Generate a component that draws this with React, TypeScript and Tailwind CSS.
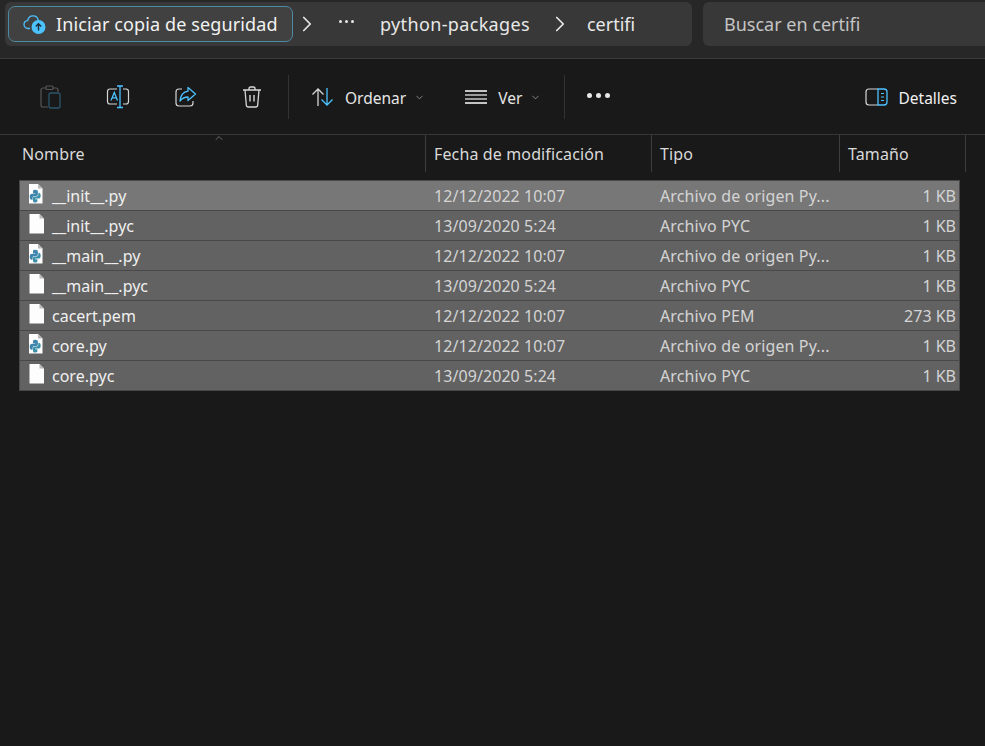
import { ChevronDown, ChevronRight, ChevronUp } from "lucide-react";

const font = "font-['Noto_Sans','Open_Sans',sans-serif]";

type FileRow = { name: string; date: string; type: string; size: string; python: boolean };

const files: FileRow[] = [
  { name: "__init__.py", date: "12/12/2022 10:07", type: "Archivo de origen Py...", size: "1 KB", python: true },
  { name: "__init__.pyc", date: "13/09/2020 5:24", type: "Archivo PYC", size: "1 KB", python: false },
  { name: "__main__.py", date: "12/12/2022 10:07", type: "Archivo de origen Py...", size: "1 KB", python: true },
  { name: "__main__.pyc", date: "13/09/2020 5:24", type: "Archivo PYC", size: "1 KB", python: false },
  { name: "cacert.pem", date: "12/12/2022 10:07", type: "Archivo PEM", size: "273 KB", python: false },
  { name: "core.py", date: "12/12/2022 10:07", type: "Archivo de origen Py...", size: "1 KB", python: true },
  { name: "core.pyc", date: "13/09/2020 5:24", type: "Archivo PYC", size: "1 KB", python: false },
];

function FileIcon({ python }: { python: boolean }) {
  return (
    <svg width="16" height="20" viewBox="0 0 16 20" className="mb-[3px] shrink-0">
      {python ? (
        <g transform="translate(-1 0)">
          <path d="M0 0H10L14.5 4.5V19.5H0Z" fill="#fdfdfd" />
          <path d="M10 0V4.5H14.5Z" fill="#b8b8b8" />
          <g transform="translate(0.3 -1.4) scale(1 1.2)">
            <path d="M6.6 6C4.6 6 4.7 7 4.7 7.5V8.8H6.9V9.3H3.6C2.4 9.3 1.4 10 1.4 11.7C1.4 13.4 2.2 14.2 3.3 14.2H4.3V12.9C4.3 11.9 5.1 11.2 6.1 11.2H8.2C9 11.2 9.6 10.6 9.6 9.8V7.5C9.6 6.7 8.8 6 6.6 6Z" fill="#3f86ae" />
            <path d="M7.2 16.6C9.2 16.6 9.1 15.6 9.1 15.1V13.8H6.9V13.3H10.2C11.4 13.3 12.4 12.6 12.4 10.9C12.4 9.2 11.6 8.4 10.5 8.4H10.1V9.8C10.1 10.8 9.3 11.6 8.3 11.6H6.1C5.3 11.6 4.7 12.2 4.7 13V15.1C4.7 15.9 5 16.6 7.2 16.6Z" fill="#3c8fa8" />
          </g>
        </g>
      ) : (
        <>
          <path d="M0.5 0H10.5L15 4.5V19.5H0.5Z" fill="#fdfdfd" />
          <path d="M10.5 0V4.5H15Z" fill="#b8b8b8" />
        </>
      )}
    </svg>
  );
}

function CloudIcon() {
  return (
    <svg width="24" height="22" viewBox="0 0 24 22" fill="none" className="shrink-0">
      <path d="M6.5 15.5H5C2.8 15.5 1 13.8 1 11.6C1 9.5 2.6 7.9 4.6 7.7C5.2 4.8 7.4 2.8 10 2.8C12.7 2.8 14.9 4.8 15.4 7.5" stroke="#4cc2ff" strokeWidth="1.3" strokeLinecap="round" />
      <circle cx="15.5" cy="14" r="7" fill="#4cc2ff" />
      <path d="M15.5 17.5V11M12.8 13.5L15.5 10.8L18.2 13.5" stroke="#1b2a33" strokeWidth="1.4" />
    </svg>
  );
}

function Toolbar() {
  return (
    <div className="flex h-[76px] items-center border-b border-[#373737] bg-[#191919]">
      <div className="flex w-[288px] items-center">
        <svg width="22" height="24" viewBox="0 0 22 24" fill="none" className="ml-[40px] mt-[1px]">
          <path d="M6 3H3C1.9 3 1 3.9 1 5V20C1 21.2 1.9 22 3 22H8" stroke="#565656" strokeWidth="1.2" />
          <path d="M13 3H16C17 3 18 3.9 18 5V7" stroke="#565656" strokeWidth="1.2" />
          <rect x="6" y="1" width="7" height="3.5" rx="1" stroke="#565656" strokeWidth="1.2" />
          <rect x="9" y="8" width="11" height="15" rx="2" stroke="#2b566b" strokeWidth="1.3" />
        </svg>
        <svg width="24" height="24" viewBox="0 0 24 24" fill="none" className="ml-[44px]">
          <path d="M11 4H4C2.4 4 1.5 5 1.5 6.5V16.5C1.5 18 2.4 19 4 19H11" stroke="#d6d6d6" strokeWidth="1.2" />
          <path d="M17 4H20C21.6 4 22.5 5 22.5 6.5V16.5C22.5 18 21.6 19 20 19H17" stroke="#d6d6d6" strokeWidth="1.2" />
          <path d="M11 1H17M14 1V22.5M11 22.5H17" stroke="#4cc2ff" strokeWidth="1.3" />
          <path d="M5 15.5L8.3 7.5L11.5 15.5M6.3 12.8H10.4" stroke="#4cc2ff" strokeWidth="1.3" />
        </svg>
        <svg width="22" height="22" viewBox="0 0 22 22" fill="none" className="ml-[45px]">
          <path d="M7 3H4C2.3 3 1 4.3 1 6V17C1 18.7 2.3 20 4 20H15C16.7 20 18 18.7 18 17V15" stroke="#d6d6d6" strokeWidth="1.2" />
          <path d="M13 1.5L20.5 8L13 14.5V11C9.5 11 7.2 12.2 5 15C5.5 10 8 6 13 5.2Z" stroke="#4cc2ff" strokeWidth="1.3" strokeLinejoin="round" />
        </svg>
        <svg width="20" height="22" viewBox="0 0 20 22" fill="none" className="ml-[45px]">
          <path d="M1 4H19M7 4V2.5C7 1.7 7.6 1 8.5 1H11.5C12.4 1 13 1.7 13 2.5V4" stroke="#d6d6d6" strokeWidth="1.4" />
          <path d="M3 4L4.3 19C4.4 20.2 5.2 21 6.4 21H13.6C14.8 21 15.6 20.2 15.7 19L17 4" stroke="#d6d6d6" strokeWidth="1.3" />
          <path d="M8 9V15.5M12 9V15.5" stroke="#d6d6d6" strokeWidth="1.4" />
        </svg>
      </div>
      <div className="h-[44px] w-px bg-[#333333]" />
      <div className="ml-[22px] flex items-center">
        <svg width="24" height="20" viewBox="0 0 24 20" fill="none">
          <path d="M7 19V2M1.5 7.5L7 2L12.5 7.5" stroke="#d6d6d6" strokeWidth="1.3" />
          <path d="M16 1V18M10.5 12.5L16 18L21.5 12.5" stroke="#4cc2ff" strokeWidth="1.3" />
        </svg>
        <span className="ml-[10px] mt-[3px] text-[15.5px] leading-5 text-[#e6e6e6]">Ordenar</span>
        <ChevronDown size={11} strokeWidth={1.5} className="ml-[8px] mt-[1px] text-[#b0b0b0]" />
      </div>
      <div className="ml-[40px] flex items-center">
        <div className="flex w-[22px] flex-col gap-[2px]">
          <div className="h-[2px] bg-[#c4c4c4]" />
          <div className="h-[2px] bg-[#9a9a9a]" />
          <div className="h-[2px] bg-[#9a9a9a]" />
          <div className="h-[2px] bg-[#c4c4c4]" />
        </div>
        <span className="ml-[11px] mt-[3px] text-[15.5px] leading-5 text-[#e6e6e6]">Ver</span>
        <ChevronDown size={11} strokeWidth={1.5} className="ml-[8px] mt-[1px] text-[#b0b0b0]" />
      </div>
      <div className="ml-[23px] h-[44px] w-px bg-[#333333]" />
      <div className="ml-[22px] mb-[3px] flex gap-[4px]">
        <div className="h-[5px] w-[5px] rounded-full bg-[#e8e8e8]" />
        <div className="h-[5px] w-[5px] rounded-full bg-[#e8e8e8]" />
        <div className="h-[5px] w-[5px] rounded-full bg-[#e8e8e8]" />
      </div>
      <div className="ml-auto mr-[28px] flex items-center">
        <svg width="23" height="18" viewBox="0 0 23 18" fill="none">
          <path d="M13 1H4C2.3 1 1 2.3 1 4V14C1 15.7 2.3 17 4 17H13" stroke="#d6d6d6" strokeWidth="1.2" />
          <path d="M13 1H19C20.7 1 22 2.3 22 4V14C22 15.7 20.7 17 19 17H13V1Z" stroke="#4cc2ff" strokeWidth="1.3" />
          <path d="M16 5.5H19M16 9H19M16 12.5H19" stroke="#4cc2ff" strokeWidth="1.2" />
        </svg>
        <span className="ml-[10px] mt-[3px] text-[15.5px] leading-5 text-[#f0f0f0]">Detalles</span>
      </div>
    </div>
  );
}

export default function App() {
  return (
    <div className={`h-[746px] w-[985px] overflow-hidden bg-[#191919] ${font}`}>
      <div className="flex h-[59px] gap-[11px] border-b border-[#3a3a3a] bg-[#272727] pl-[5px] pt-[2px]">
        <div className="flex h-[44px] w-[687px] items-center rounded-md bg-[#383838] pl-[3px]">
          <div className="flex h-[36px] w-[285px] items-center rounded-[7px] border border-[#4d8aa3] bg-[#414141] pl-[14px]">
            <CloudIcon />
            <span className="ml-[9px] text-[18px] leading-6 tracking-[0.12px] text-[#f2f2f2]">Iniciar copia de seguridad</span>
          </div>
          <ChevronRight size={26} strokeWidth={1.6} className="ml-[1px] text-[#e8e8e8]" />
          <div className="ml-[19px] mb-[5px] flex gap-[3px]">
            <div className="h-[3px] w-[3px] rounded-full bg-[#e8e8e8]" />
            <div className="h-[3px] w-[3px] rounded-full bg-[#e8e8e8]" />
            <div className="h-[3px] w-[3px] rounded-full bg-[#e8e8e8]" />
          </div>
          <span className="ml-[26px] text-[18px] leading-6 tracking-[0.35px] text-[#e8e8e8]">python-packages</span>
          <ChevronRight size={26} strokeWidth={1.6} className="ml-[17px] text-[#e8e8e8]" />
          <span className="ml-[14px] text-[18px] leading-6 text-[#e8e8e8]">certifi</span>
        </div>
        <div className="flex h-[44px] flex-1 items-center rounded-l-md bg-[#383838] pl-[21px]">
          <span className="text-[18px] leading-6 text-[#c4c4c4]">Buscar en certifi</span>
        </div>
      </div>

      <Toolbar />

      <div className="relative flex h-[37px] text-[16px] leading-5 tracking-[0.13px] text-[#d9d9d9]">
        <ChevronUp size={12} strokeWidth={1.2} className="absolute left-[213px] top-[-3px] text-[#a0a0a0]" />
        <div className="flex h-full w-[426px] items-center border-r border-[#3d3d3d] pl-[22px]">Nombre</div>
        <div className="flex h-full w-[226px] items-center border-r border-[#3d3d3d] pl-[8px]">Fecha de modificación</div>
        <div className="flex h-full w-[188px] items-center border-r border-[#3d3d3d] pl-[8px]">Tipo</div>
        <div className="flex h-full w-[126px] items-center border-r border-[#3d3d3d] pl-[8px]">Tamaño</div>
      </div>

      <div className="ml-[19px] mt-[8px] w-[941px] border-t border-[#4a4a4a]">
        {files.map((file, i) => (
          <div
            key={file.name}
            className={`flex h-[30px] items-center border-b border-l border-r border-[#484848] text-[16px] leading-5 ${
              i === 0 ? "bg-[#777777]" : "bg-[#626262]"
            }`}
          >
            <div className="flex w-[406px] items-center pl-[9px]">
              <FileIcon python={file.python} />
              <span className="ml-[7px] text-[#f0f0f0]">{file.name}</span>
            </div>
            <div className="w-[226px] pl-[8px] tracking-[0.07px] text-[#d4d4d4]">{file.date}</div>
            <div className="w-[188px] pl-[8px] tracking-[0.13px] text-[#d4d4d4]">{file.type}</div>
            <div className="flex-1 pr-[3px] text-right text-[#d4d4d4]">{file.size}</div>
          </div>
        ))}
      </div>
    </div>
  );
}
